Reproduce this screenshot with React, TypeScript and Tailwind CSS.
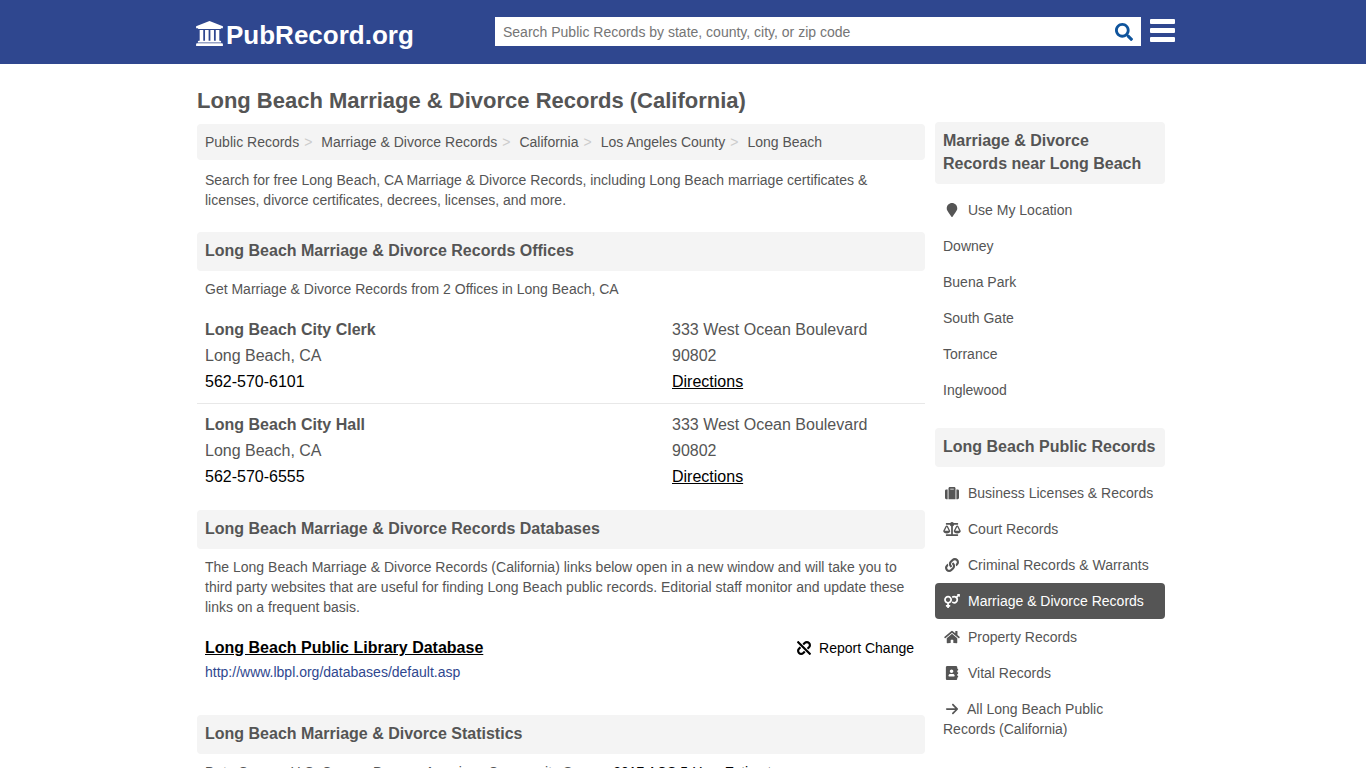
import type { ReactNode } from "react";
import type { IconType } from "react-icons";
import {
  FaAddressBook,
  FaBalanceScale,
  FaHome,
  FaLink,
  FaMapMarker,
  FaSearch,
  FaSuitcase,
  FaUnlink,
  FaVenusMars,
} from "react-icons/fa";
import { FaArrowRight } from "react-icons/fa6";

type Office = {
  name: string;
  city: string;
  phone: string;
  street: string;
  zip: string;
};

type RecordLink = {
  label: string;
  icon: IconType;
  active?: boolean;
};

const breadcrumbs = [
  "Public Records",
  "Marriage & Divorce Records",
  "California",
  "Los Angeles County",
  "Long Beach",
];

const offices: Office[] = [
  {
    name: "Long Beach City Clerk",
    city: "Long Beach, CA",
    phone: "562-570-6101",
    street: "333 West Ocean Boulevard",
    zip: "90802",
  },
  {
    name: "Long Beach City Hall",
    city: "Long Beach, CA",
    phone: "562-570-6555",
    street: "333 West Ocean Boulevard",
    zip: "90802",
  },
];

const nearby = ["Downey", "Buena Park", "South Gate", "Torrance", "Inglewood"];

const recordLinks: RecordLink[] = [
  { label: "Business Licenses & Records", icon: FaSuitcase },
  { label: "Court Records", icon: FaBalanceScale },
  { label: "Criminal Records & Warrants", icon: FaLink },
  { label: "Marriage & Divorce Records", icon: FaVenusMars, active: true },
  { label: "Property Records", icon: FaHome },
  { label: "Vital Records", icon: FaAddressBook },
];

function SectionHeading({ children }: { children: ReactNode }) {
  return (
    <h2 className="rounded bg-[#f4f4f4] px-2 pt-[7px] pb-[9px] text-base leading-[23px] font-bold">
      {children}
    </h2>
  );
}

function LogoIcon() {
  return (
    <svg
      viewBox="0 0 1920 1792"
      className="mt-px h-[25px] w-[27px]"
      fill="currentColor"
      aria-hidden="true">
      <path d="M960 0l960 384v128h-128q0 26-20.5 45t-48.5 19H197q-28 0-48.5-19T128 512H0V384zM256 640h256v768h128V640h256v768h128V640h256v768h128V640h256v768h59q28 0 48.5 19t20.5 45v64H128v-64q0-26 20.5-45t48.5-19h59zM1851 1600q28 0 48.5 19t20.5 45v128H0v-128q0-26 20.5-45t48.5-19z" />
    </svg>
  );
}

function Header() {
  return (
    <header className="bg-[#2f478f] text-white">
      <div className="mx-auto flex h-16 max-w-[990px] items-start pr-[3px] pl-2">
        <a
          href="#"
          className="mt-5 flex w-[299px] shrink-0 gap-[3px] text-[26px] leading-[30px] font-bold">
          <LogoIcon />
          PubRecord.org
        </a>
        <form
          className="mt-[17px] flex h-[29px] flex-1 items-center bg-white"
          onSubmit={(e) => e.preventDefault()}>
          <input
            type="search"
            aria-label="Search Public Records"
            placeholder="Search Public Records by state, county, city, or zip code"
            className="h-full min-w-0 flex-1 px-2 text-sm text-gray-700 outline-none placeholder:text-[#757575]"
          />
          <button
            type="submit"
            aria-label="Search"
            className="px-2 text-[#0f549c]">
            <FaSearch className="size-[18px]" />
          </button>
        </form>
        <button
          type="button"
          aria-label="Menu"
          className="mt-[19px] ml-[9px] flex w-[25px] flex-col gap-1">
          <span className="h-[5px] rounded-[1px] bg-white" />
          <span className="h-[5px] rounded-[1px] bg-white" />
          <span className="h-[5px] rounded-[1px] bg-white" />
        </button>
      </div>
    </header>
  );
}

function OfficeRow({ office }: { office: Office }) {
  return (
    <li className="grid grid-cols-[467px_1fr] border-[#e8e8e8] p-2 text-base leading-[26px] not-last:border-b">
      <div>
        <h3 className="font-bold">{office.name}</h3>
        <p>{office.city}</p>
        <a href="#" className="text-black">
          {office.phone}
        </a>
      </div>
      <div>
        <p>{office.street}</p>
        <p>{office.zip}</p>
        <a href="#" className="text-black underline">
          Directions
        </a>
      </div>
    </li>
  );
}

function Sidebar() {
  return (
    <aside className="mt-[22px] w-[230px] shrink-0 text-sm leading-5">
      <SectionHeading>Marriage & Divorce Records near Long Beach</SectionHeading>
      <ul className="mt-2">
        <li>
          <a href="#" className="flex items-center p-2">
            <FaMapMarker className="mr-[7px] h-3.5 w-[18px]" />
            Use My Location
          </a>
        </li>
        {nearby.map((city) => (
          <li key={city}>
            <a href="#" className="block p-2">
              {city}
            </a>
          </li>
        ))}
      </ul>

      <div className="mt-5">
        <SectionHeading>Long Beach Public Records</SectionHeading>
      </div>
      <ul className="mt-2">
        {recordLinks.map(({ label, icon: Icon, active }) => (
          <li key={label}>
            <a
              href="#"
              aria-current={active ? "page" : undefined}
              className={
                active
                  ? "flex items-center rounded bg-[#555] p-2 text-white"
                  : "flex items-center p-2"
              }>
              <Icon className="mr-[7px] h-3.5 w-[18px]" />
              {label}
            </a>
          </li>
        ))}
        <li>
          <a href="#" className="block p-2">
            <FaArrowRight className="mr-1.5 inline h-3.5 w-[18px] align-[-2px]" />
            All Long Beach Public Records (California)
          </a>
        </li>
      </ul>
    </aside>
  );
}

export default function App() {
  return (
    <div className="min-h-screen bg-white font-['Liberation_Sans',Arial,sans-serif] text-[#555]">
      <Header />
      <div className="mx-auto max-w-[990px] pt-[22px] pr-[13px] pl-[9px]">
        <h1 className="text-[22px] leading-[30px] font-bold">
          Long Beach Marriage & Divorce Records (California)
        </h1>
        <div className="-mt-4 flex gap-2.5">
          <main className="mt-6 min-w-0 flex-1 text-sm leading-5">
            <nav aria-label="Breadcrumb" className="rounded bg-[#f4f4f4] p-2">
              <ol className="flex">
                {breadcrumbs.map((crumb) => (
                  <li
                    key={crumb}
                    className="not-last:after:mr-[9px] not-last:after:ml-[5px] not-last:after:text-[#ccc] not-last:after:content-['>']">
                    <a href="#">{crumb}</a>
                  </li>
                ))}
              </ol>
            </nav>
            <p className="mt-2.5 px-2">
              Search for free Long Beach, CA Marriage & Divorce Records,
              including Long Beach marriage certificates & licenses, divorce
              certificates, decrees, licenses, and more.
            </p>

            <section className="mt-[22px]">
              <SectionHeading>
                Long Beach Marriage & Divorce Records Offices
              </SectionHeading>
              <p className="mt-2 px-2">
                Get Marriage & Divorce Records from 2 Offices in Long Beach, CA
              </p>
              <ul className="mt-2.5">
                {offices.map((office) => (
                  <OfficeRow key={office.name} office={office} />
                ))}
              </ul>
            </section>

            <section className="mt-3">
              <SectionHeading>
                Long Beach Marriage & Divorce Records Databases
              </SectionHeading>
              <p className="mt-2 px-2">
                The Long Beach Marriage & Divorce Records (California) links
                below open in a new window and will take you to third party
                websites that are useful for finding Long Beach public records.
                Editorial staff monitor and update these links on a frequent
                basis.
              </p>
              <div className="mt-[19px] flex justify-between pr-[11px] pl-2 text-black">
                <div>
                  <a
                    href="#"
                    className="block text-base leading-6 font-bold underline">
                    Long Beach Public Library Database
                  </a>
                  <a href="#" className="mt-0.5 block text-[#2f478f]">
                    http://www.lbpl.org/databases/default.asp
                  </a>
                </div>
                <button type="button" className="flex h-6 items-center gap-2">
                  <FaUnlink className="size-3.5" />
                  Report Change
                </button>
              </div>
            </section>

            <section className="mt-[33px]">
              <SectionHeading>
                Long Beach Marriage & Divorce Statistics
              </SectionHeading>
              <p className="mt-2 px-2">
                Data Source: U.S. Census Bureau; American Community Survey,{" "}
                <a href="#" className="text-black">
                  2017 ACS 5-Year Estimates
                </a>
                .
              </p>
            </section>
          </main>
          <Sidebar />
        </div>
      </div>
    </div>
  );
}
